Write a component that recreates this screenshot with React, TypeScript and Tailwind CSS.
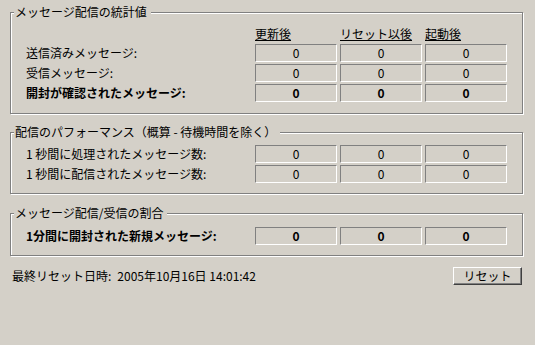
import React from 'react';

interface StatRow {
  label: string;
  values: string[];
  bold?: boolean;
}

const sunken =
  'w-[82px] h-[18px] border-t border-l border-t-[#808080] border-l-[#808080] border-b border-r border-b-white border-r-white text-center leading-[16px]';

const GroupBox = ({
  title,
  className,
  children,
}: {
  title: string;
  className: string;
  children: React.ReactNode;
}) => (
  <div
    className={`relative w-[513px] border border-[#808080] shadow-[1px_1px_0_#ffffff,inset_1px_1px_0_#ffffff] ${className}`}
  >
    <span className="absolute left-[3px] top-[-8px] bg-[#d4d0c8] pl-[1px] pr-[4px] leading-[14px] whitespace-nowrap">
      {title}
    </span>
    {children}
  </div>
);

const Row = ({ row }: { row: StatRow }) => (
  <div className={`flex items-center ${row.bold ? 'font-bold' : ''}`}>
    <div className="w-[244px] pl-[15px] whitespace-nowrap leading-[18px]">{row.label}</div>
    <div className="flex gap-[3px]">
      {row.values.map((v, i) => (
        <div key={i} className={sunken}>
          {v}
        </div>
      ))}
    </div>
  </div>
);

const App = () => {
  const stats: StatRow[] = [
    { label: '送信済みメッセージ:', values: ['0', '0', '0'] },
    { label: '受信メッセージ:', values: ['0', '0', '0'] },
    { label: '開封が確認されたメッセージ:', values: ['0', '0', '0'], bold: true },
  ];

  const perf: StatRow[] = [
    { label: '1 秒間に処理されたメッセージ数:', values: ['0', '0', '0'] },
    { label: '1 秒間に配信されたメッセージ数:', values: ['0', '0', '0'] },
  ];

  const ratio: StatRow[] = [
    { label: '1分間に開封された新規メッセージ:', values: ['0', '0', '0'], bold: true },
  ];

  return (
    <div className="w-[535px] h-[345px] bg-[#d4d0c8] pt-[12px] pl-[10px] text-[12px] text-black font-['Noto_Sans_CJK_JP',sans-serif]">
      {/* Statistics */}
      <GroupBox title="メッセージ配信の統計値" className="h-[102px] pt-[13px]">
        <div className="flex h-[16px] leading-[16px] mb-[2px] pl-[244px] gap-[3px]">
          <span className="w-[82px] underline">更新後</span>
          <span className="w-[82px] underline">リセット以後</span>
          <span className="w-[82px] underline">起動後</span>
        </div>
        <div className="flex flex-col gap-[2px]">
          {stats.map((r) => (
            <Row key={r.label} row={r} />
          ))}
        </div>
      </GroupBox>

      {/* Performance */}
      <GroupBox title="配信のパフォーマンス（概算 - 待機時間を除く）" className="mt-[18px] h-[62px] pt-[12px]">
        <div className="flex flex-col gap-[2px]">
          {perf.map((r) => (
            <Row key={r.label} row={r} />
          ))}
        </div>
      </GroupBox>

      {/* Ratio */}
      <GroupBox title="メッセージ配信/受信の割合" className="mt-[19px] h-[43px] pt-[13px]">
        {ratio.map((r) => (
          <Row key={r.label} row={r} />
        ))}
      </GroupBox>

      {/* Footer */}
      <div className="w-[513px] mt-[11px] flex items-center justify-between">
        <div className="pl-[2px] whitespace-nowrap">
          最終リセット日時:<span className="ml-[6px]">2005年10月16日 14:01:42</span>
        </div>
        <button className="w-[69px] h-[18px] mr-[1px] border border-t-white border-l-white border-b-[#404040] border-r-[#404040] shadow-[inset_-1px_-1px_0_#808080] bg-[#d4d0c8] leading-[14px] text-[12px]">
          リセット
        </button>
      </div>
    </div>
  );
};

export default App;
